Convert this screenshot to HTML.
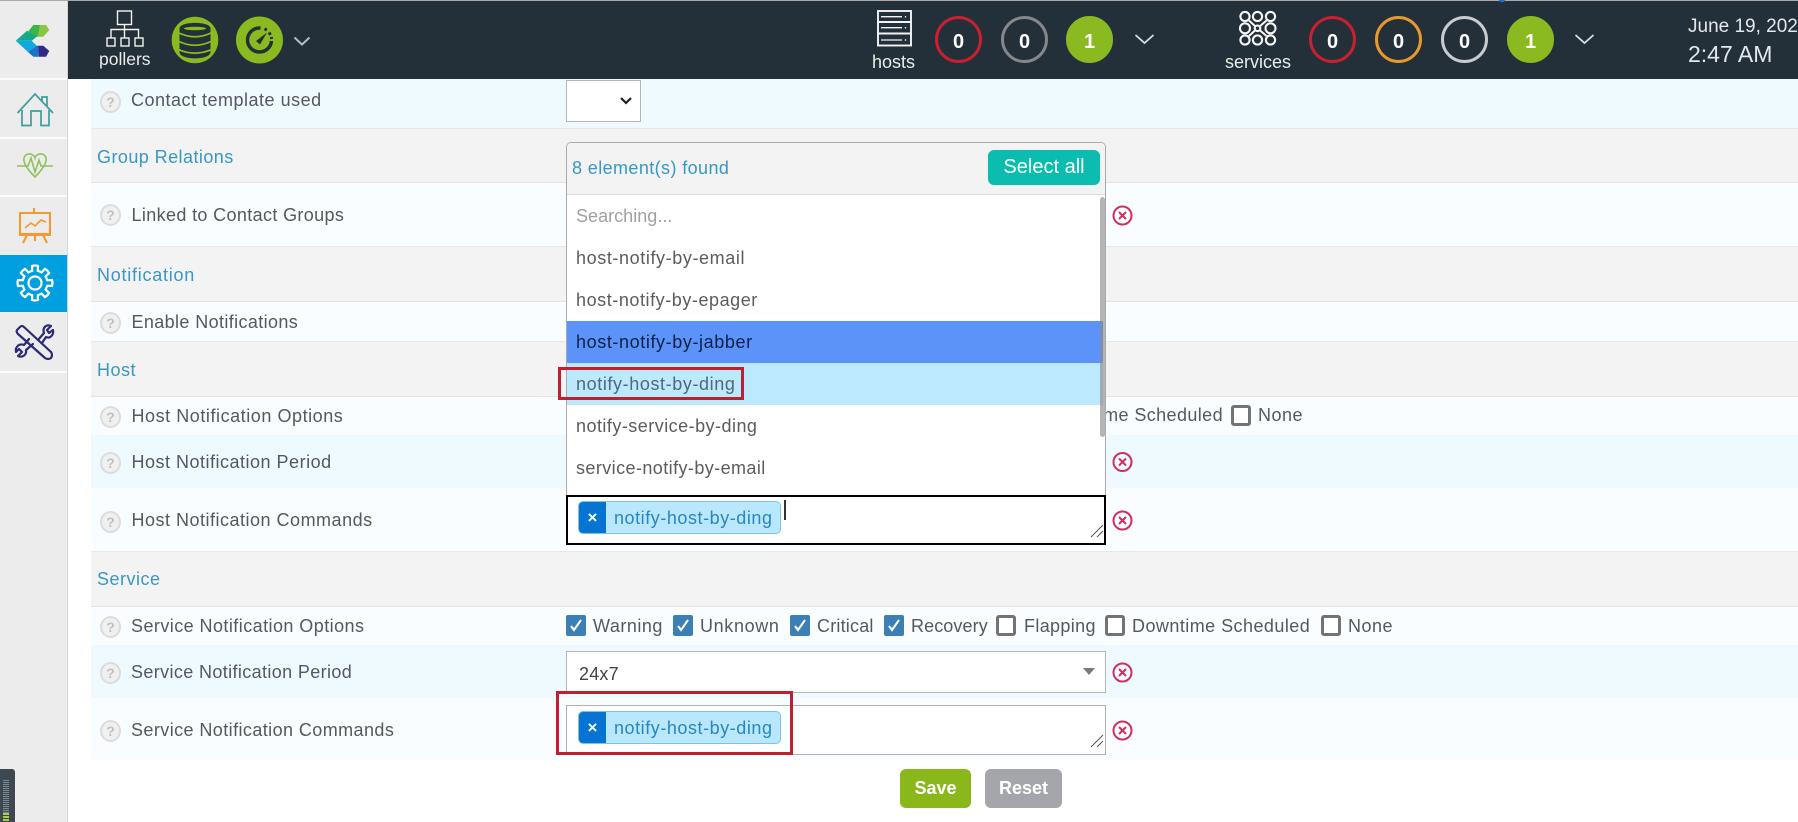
<!DOCTYPE html>
<html lang="en"><head><meta charset="utf-8"><title>Contact configuration</title>
<style>
*{box-sizing:border-box}
html,body{margin:0;padding:0;width:1798px;height:822px;overflow:hidden;background:#fff;font-family:"Liberation Sans",sans-serif}
.a{position:absolute}
.t{position:absolute;white-space:nowrap;height:24px;line-height:24px;font-size:18px;letter-spacing:.5px;color:#56595c}
.sec{color:#3a97c4}
.row{position:absolute;left:91px;width:1707px}
.s{background:#f3f3f3;border-top:1px solid #e8e8e8;border-bottom:1px solid #e4e4e4}
.l{background:#f9fdff}.d{background:#eefaff}
.q{position:absolute;left:100px;width:21px;height:22px;border-radius:50%;border:2px solid #dcdcdc;background:#f0f0f0;color:#c0c0c0;font-size:14px;font-weight:bold;line-height:18px;text-align:center}
.cb{position:absolute;width:20px;height:21px;border-radius:2px}
.on{background:#3c7fb4}
.off{border:3px solid #737373;background:#fff;border-radius:3px}
.c{position:absolute;width:47px;height:47px;border-radius:50%;border:3px solid;top:16px;color:#fff;font-weight:bold;font-size:20px;line-height:47px;text-align:center}
.g{background:#8aba20;border-color:#8aba20}
.hd{position:absolute;white-space:nowrap;color:#e8eee8;font-size:18px;height:20px;line-height:20px}
.opt{position:absolute;left:1px;width:536px;height:42px;line-height:42px;padding-left:9px;font-size:18px;letter-spacing:.6px;color:#5a5c5e;white-space:nowrap}
.tag{position:absolute;left:578px;width:203px;height:33px;background:#b9e8fd;border:1px solid #7cc3e6;border-radius:5px;overflow:hidden;color:#2a86c0;font-size:18px;letter-spacing:.55px;line-height:33px;padding-left:35px;white-space:nowrap}
.tag b{position:absolute;left:0;top:0;width:27px;height:33px;background:#0674d0;color:#fff;font-size:17px;line-height:32px;text-align:center;letter-spacing:0}
.red{position:absolute;border:3px solid #c01f2e}
.btn{position:absolute;border-radius:6px;color:#fff;font-weight:bold;font-size:18px;text-align:center;top:769px;height:39px;line-height:38px}
svg{position:absolute;overflow:visible}
</style></head><body>

<!-- content rows -->
<div class="row d" style="top:79px;height:49px"></div>
<div class="row s" style="top:128px;height:55px"></div>
<div class="row l" style="top:183px;height:63px"></div>
<div class="row s" style="top:246px;height:56px"></div>
<div class="row l" style="top:302px;height:39px"></div>
<div class="row s" style="top:341px;height:56px"></div>
<div class="row l" style="top:397px;height:38px"></div>
<div class="row d" style="top:435px;height:53px"></div>
<div class="row l" style="top:488px;height:64px"></div>
<div class="row s" style="top:551px;height:56px"></div>
<div class="row l" style="top:607px;height:38px"></div>
<div class="row d" style="top:645px;height:53px"></div>
<div class="row l" style="top:698px;height:62px"></div>

<!-- labels -->
<div class="q" style="top:91px">?</div><div class="t" style="left:131px;top:88px">Contact template used</div>
<div class="t sec" style="left:97px;top:145px;letter-spacing:.44px">Group Relations</div>
<div class="q" style="top:204px">?</div><div class="t" style="left:131.500px;top:203px;letter-spacing:.36px">Linked to Contact Groups</div>
<div class="t sec" style="left:97px;top:263px;letter-spacing:.75px">Notification</div>
<div class="q" style="top:312px">?</div><div class="t" style="left:131.500px;top:310px;letter-spacing:.38px">Enable Notifications</div>
<div class="t sec" style="left:97px;top:358px">Host</div>
<div class="q" style="top:406px">?</div><div class="t" style="left:131.500px;top:404px;letter-spacing:.55px">Host Notification Options</div>
<div class="q" style="top:452px">?</div><div class="t" style="left:131.500px;top:450px">Host Notification Period</div>
<div class="q" style="top:511px">?</div><div class="t" style="left:131.500px;top:508px">Host Notification Commands</div>
<div class="t sec" style="left:97px;top:567px">Service</div>
<div class="q" style="top:616px">?</div><div class="t" style="left:131px;top:614px;letter-spacing:.44px">Service Notification Options</div>
<div class="q" style="top:662px">?</div><div class="t" style="left:131px;top:660px;letter-spacing:.37px">Service Notification Period</div>
<div class="q" style="top:720px">?</div><div class="t" style="left:131px;top:718px;letter-spacing:.42px">Service Notification Commands</div>

<!-- top select -->
<div class="a" style="left:566px;top:80px;width:75px;height:42px;background:#fff;border:1px solid #b5b5b5"></div>
<svg style="left:0;top:0" width="1" height="1"><path d="M621 98l5 5 5-5" fill="none" stroke="#222" stroke-width="2.2"/></svg>

<!-- host options remainder -->
<div class="t" style="left:1105px;top:403px;width:118px;overflow:hidden;direction:rtl;letter-spacing:.4px">me Scheduled</div>
<div class="cb off" style="left:1231px;top:405px">&nbsp;</div>
<div class="t" style="left:1258px;top:403px">None</div>

<!-- dropdown -->
<div class="a" style="left:566px;top:142px;width:540px;height:354px;background:#fff;border:1px solid #aaa;border-bottom:0;border-radius:5px 5px 0 0;overflow:hidden">
  <div class="a" style="left:0;top:0;width:538px;height:52px;background:#f3f3f3;border-bottom:1px solid #dedede"></div>
  <div class="opt" style="top:52px;left:0;color:#a0a0a0;letter-spacing:.03px">Searching...</div>
  <div class="opt" style="top:94px;left:0">host-notify-by-email</div>
  <div class="opt" style="top:136px;left:0;letter-spacing:.56px">host-notify-by-epager</div>
  <div class="opt" style="top:178px;left:0;background:#5b93f8;color:#0d2147">host-notify-by-jabber</div>
  <div class="opt" style="top:220px;left:0;background:#bce9fd;color:#4f6a78">notify-host-by-ding</div>
  <div class="opt" style="top:262px;left:0;letter-spacing:.47px">notify-service-by-ding</div>
  <div class="opt" style="top:304px;left:0;letter-spacing:.42px">service-notify-by-email</div>
  <div class="a" style="left:533px;top:54px;width:5px;height:240px;background:rgba(140,140,140,.65);border-radius:3px"></div>
</div>
<div class="t sec" style="left:572px;top:156px;letter-spacing:.4px">8 element(s) found</div>
<div class="a" style="left:988px;top:150px;width:112px;height:35px;background:#0bbdae;border-radius:6px;color:#fff;font-size:20px;line-height:34px;text-align:center">Select all</div>
<div class="red" style="left:558px;top:367px;width:186px;height:33px"></div>

<!-- host commands textarea -->
<div class="a" style="left:566px;top:495px;width:540px;height:50px;background:#fff;border:2px solid #000"></div>
<div class="tag" style="top:501px"><b>×</b>notify-host-by-ding</div>
<div class="a" style="left:784px;top:500px;width:2px;height:20px;background:#333"></div>
<svg style="left:0;top:0" width="1" height="1"><path d="M1091 537l12-12M1097 537l6-6" stroke="#555" fill="none"/></svg>

<!-- service options -->
<div class="cb on" style="left:566px;top:615px"></div><div class="t" style="left:593px;top:614px">Warning</div>
<div class="cb on" style="left:673px;top:615px"></div><div class="t" style="left:700px;top:614px;letter-spacing:.65px">Unknown</div>
<div class="cb on" style="left:790px;top:615px"></div><div class="t" style="left:817px;top:614px;letter-spacing:.2px">Critical</div>
<div class="cb on" style="left:884px;top:615px"></div><div class="t" style="left:911px;top:614px;letter-spacing:.1px">Recovery</div>
<div class="cb off" style="left:996px;top:615px"></div><div class="t" style="left:1024px;top:614px;letter-spacing:.35px">Flapping</div>
<div class="cb off" style="left:1105px;top:615px"></div><div class="t" style="left:1132px;top:614px;letter-spacing:.45px">Downtime Scheduled</div>
<div class="cb off" style="left:1321px;top:615px"></div><div class="t" style="left:1348px;top:614px">None</div>
<svg style="left:0;top:0" width="1" height="1"><g fill="none" stroke="#fff" stroke-width="2">
<path d="M571 626l3 4 7-10M678 626l3 4 7-10M795 626l3 4 7-10M889 626l3 4 7-10"/></g></svg>

<!-- service period -->
<div class="a" style="left:566px;top:651px;width:540px;height:42px;background:#fff;border:1px solid #b5b5b5"></div>
<div class="t" style="left:579px;top:662px;letter-spacing:.2px;color:#444">24x7</div>
<svg style="left:0;top:0" width="1" height="1"><path d="M1083 668h12l-6 7z" fill="#7a7a7a"/></svg>

<!-- service commands -->
<div class="a" style="left:566px;top:705px;width:540px;height:50px;background:#fff;border:1px solid #b0b0b0"></div>
<div class="tag" style="top:711px"><b>×</b>notify-host-by-ding</div>
<svg style="left:0;top:0" width="1" height="1"><path d="M1091 747l12-12M1097 747l6-6" stroke="#555" fill="none"/></svg>
<div class="red" style="left:556px;top:691px;width:237px;height:64px"></div>

<!-- remove icons -->
<svg style="left:0;top:0" width="1" height="1"><g fill="none" stroke="#d0305e" stroke-width="2">
<circle cx="1122.5" cy="215.5" r="9"/><path d="M1119 212l7 7M1126 212l-7 7"/>
<circle cx="1122.5" cy="462" r="9"/><path d="M1119 458.500l7 7M1126 458.500l-7 7"/>
<circle cx="1122.500" cy="520.500" r="9"/><path d="M1119 517l7 7M1126 517l-7 7"/>
<circle cx="1122.500" cy="672.500" r="9"/><path d="M1119 669l7 7M1126 669l-7 7"/>
<circle cx="1122.500" cy="730.500" r="9"/><path d="M1119 727l7 7M1126 727l-7 7"/>
</g></svg>

<div class="btn" style="left:900px;width:71px;background:#8ab81b">Save</div>
<div class="btn" style="left:985px;width:77px;background:#a5a6ab">Reset</div>

<!-- sidebar -->
<div class="a" style="left:0;top:0;width:68px;height:822px;background:#ececec;border-right:1px solid #d4d4d4"></div>
<div class="a" style="left:0;top:78px;width:67px;height:2px;background:#fafafa"></div>
<div class="a" style="left:0;top:137px;width:67px;height:2px;background:#fafafa"></div>
<div class="a" style="left:0;top:195px;width:67px;height:2px;background:#fafafa"></div>
<div class="a" style="left:0;top:255px;width:67px;height:57px;background:#009fdf"></div>
<div class="a" style="left:0;top:371px;width:67px;height:2px;background:#fafafa"></div>

<svg style="left:0;top:0" width="68" height="822">
  <!-- logo -->
  <path d="M40 25H46L49.300 30L43.300 36.700H38Z" fill="#8cc63f"/>
  <path d="M33.300 25H40L38 36.700H36.700L27 33Z" fill="#3cb54a"/>
  <path d="M15.700 40.700L27 30.800L36.700 36.700L31.700 40.700Z" fill="#14a98a"/>
  <path d="M15.700 40.700H31.700L36.700 45.700L28 52Z" fill="#10a9e0"/>
  <path d="M28 52L36.700 45.700H38L39 56.700H33.300Z" fill="#1c72c4"/>
  <path d="M38 45.700H43.300L49.300 51L46 56.700H39Z" fill="#2e2a8c"/>
  <!-- home -->
  <g fill="none" stroke="#3a9f9d" stroke-width="1.700">
    <path d="M17.500 113L35 94L53 113"/><path d="M42 101V97H47V106"/>
    <path d="M22 110V125.500H31V111H41V125.500H49V110"/>
  </g>
  <!-- heart -->
  <g fill="none" stroke="#8fc25a" stroke-width="1.600">
    <path d="M17 166H24M46 166H53"/>
    <path d="M25 164C20 153 33 151 35 158C37 151 50 153 45 164C42 170 38 174 35 177C32 174 28 170 25 164Z"/>
    <path d="M24 166H28L31 158L35 172L39 160L41 166H46"/>
  </g>
  <!-- easel -->
  <g fill="none" stroke="#f39a35" stroke-width="2.100">
    <path d="M34 208V213"/><path d="M20 213H50V234H20Z"/><path d="M19 235H51"/>
    <path d="M27 235L23 243M35 235V241M43 235L47 243"/>
    <path d="M25 228L31 223L35 226L41 220L46 222" stroke-width="1.600"/>
  </g>
  <!-- gear -->
  <g fill="none" stroke="#fff" stroke-width="2.200" transform="translate(35 283)">
    <circle r="6.500"/>
    <path id="tooth" d="M-4.800-11.500L-2.800-12.200L-3-17Q0-18 3-17L2.800-12.200L4.800-11.500"/>
    <use href="#tooth" transform="rotate(45)"/><use href="#tooth" transform="rotate(90)"/><use href="#tooth" transform="rotate(135)"/>
    <use href="#tooth" transform="rotate(180)"/><use href="#tooth" transform="rotate(225)"/><use href="#tooth" transform="rotate(270)"/><use href="#tooth" transform="rotate(315)"/>
  </g>
  <!-- tools -->
  <g fill="none" stroke="#2c2a72" stroke-width="2.200" stroke-linejoin="round" stroke-linecap="round">
    <path d="M20 327L17 330Q16 332 18 334L45 358Q48 360 51 358Q53 355 51 352L24 327Q22 325 20 327Z"/>
    <path d="M38 340L44 333C42 327 47 324 51 326L47 330L49 333L53 330C54 335 50 339 46 337L42 343"/>
    <path d="M33 344L26 350C27 355 22 358 18 356L22 352L19 349L16 352C15 347 19 343 24 345L29 339"/>
  </g>
</svg>

<!-- bottom-left widget -->
<div class="a" style="left:0;top:769px;width:15px;height:53px;background:#3d4850;border-radius:0 3px 0 0"></div>
<div class="a" style="left:3px;top:780px;width:6px;height:33px;background:repeating-linear-gradient(#7d8a92 0 1px,#3d4850 1px 2px)"></div>
<div class="a" style="left:3px;top:813px;width:6px;height:9px;background:repeating-linear-gradient(#a9d03c 0 2px,#3d4850 2px 3px)"></div>

<!-- header -->
<div class="a" style="left:0;top:0;width:1798px;height:1px;background:#a9a9a9"></div>
<div class="a" style="left:68px;top:1px;width:1730px;height:78px;background:#232f39"></div>
<div class="a" style="left:1499px;top:0;width:6px;height:2px;background:#1f6fd0;border-radius:0 0 3px 3px"></div>

<svg style="left:0;top:0" width="1798" height="79">
  <!-- pollers icon -->
  <g fill="none" stroke="#f2f4ee" stroke-width="1.400">
    <rect x="117.500" y="11" width="14" height="13.500"/>
    <path d="M124.500 24.500V38M111 38V29.500H138.500V38"/>
    <rect x="107" y="38" width="8" height="8"/><rect x="121" y="38" width="8" height="8"/><rect x="135" y="38" width="8" height="8"/>
  </g>
  <!-- db -->
  <circle cx="195" cy="40" r="23.300" fill="#8aba20"/>
  <path d="M179.500 28.500C179.500 21 210.500 21 210.500 28.500V52C210.500 60.500 179.500 60.500 179.500 52Z" fill="#232f39"/>
  <ellipse cx="195" cy="28.500" rx="11" ry="1.700" fill="#8aba20"/>
  <g fill="none" stroke="#8aba20" stroke-width="1.700">
    <path d="M178 32.500Q195 41 212 32.500M178 41Q195 49.500 212 41M178 49.300Q195 57 212 49.300"/>
  </g>
  <!-- gauge -->
  <circle cx="259.500" cy="40" r="23.500" fill="#8aba20"/>
  <g fill="none" stroke="#232f39">
    <path d="M260.500 28A12 12 0 1 0 271.500 41" stroke-width="3.500"/>
    <path d="M264.500 28.800L266.800 30M269 32.500L270.500 34.800M271.300 37L271.600 39" stroke-width="3"/>
  </g>
  <path d="M256 41L267 32.500L260 44.500Z" fill="#232f39"/>
  <path d="M294.500 37.500L302 44.500L309.500 37.500" fill="none" stroke="#b6bcc2" stroke-width="2"/>
  <!-- hosts -->
  <g fill="none" stroke="#f2f4f6">
    <g stroke-width="1.900"><rect x="878" y="11" width="33" height="11"/><rect x="878" y="22" width="33" height="11.500"/><rect x="878" y="33.500" width="33" height="12"/></g>
    <path d="M881 16.700H902M881 27.700H902M881 40H902M905.500 16v1.500M905.500 27v1.500M905.500 39.300v1.500" stroke-width="1.300"/>
  </g>
  <path d="M1135.500 35L1144.500 43L1153.500 35" fill="none" stroke="#d8dde0" stroke-width="1.800"/>
  <!-- services -->
  <g fill="none" stroke="#f6f8f8" stroke-width="2.100">
    <circle cx="1245" cy="16.500" r="4.600"/><circle cx="1257.500" cy="16.500" r="4.600"/><circle cx="1270.500" cy="16.500" r="4.600"/>
    <circle cx="1245" cy="28.300" r="5"/><circle cx="1257.500" cy="28.300" r="2.800"/><circle cx="1270.500" cy="28.300" r="5"/>
    <circle cx="1245" cy="40" r="4.600"/><circle cx="1257.500" cy="40" r="4.600"/><circle cx="1270.500" cy="40" r="4.600"/>
    <path d="M1249 20.500L1255.500 26.500M1266.500 20.500L1259.500 26.500M1249 36L1255.500 30M1266.500 36L1259.500 30"/>
  </g>
  <path d="M1575.500 35L1584.500 43L1593.500 35" fill="none" stroke="#d8dde0" stroke-width="1.800"/>
</svg>

<div class="hd" style="left:99px;top:49px;font-size:17.500px">pollers</div>
<div class="hd" style="left:872px;top:52px">hosts</div>
<div class="hd" style="left:1225px;top:52px">services</div>

<div class="c" style="left:935px;border-color:#c8202f">0</div>
<div class="c" style="left:1001px;border-color:#85878a">0</div>
<div class="c g" style="left:1066px">1</div>
<div class="c" style="left:1309px;border-color:#c8202f">0</div>
<div class="c" style="left:1375px;border-color:#e8992e">0</div>
<div class="c" style="left:1441px;border-color:#c9cbcc">0</div>
<div class="c g" style="left:1507px">1</div>

<div class="a" style="left:1688px;top:15px;width:110px;height:24px;overflow:hidden;white-space:nowrap;color:#e2e8ec;font-size:19px;line-height:24px">June 19, 2021</div>
<div class="a" style="left:1688px;top:40px;white-space:nowrap;color:#e2e8ec;font-size:23px;line-height:28px">2:47 AM</div>

</body></html>
